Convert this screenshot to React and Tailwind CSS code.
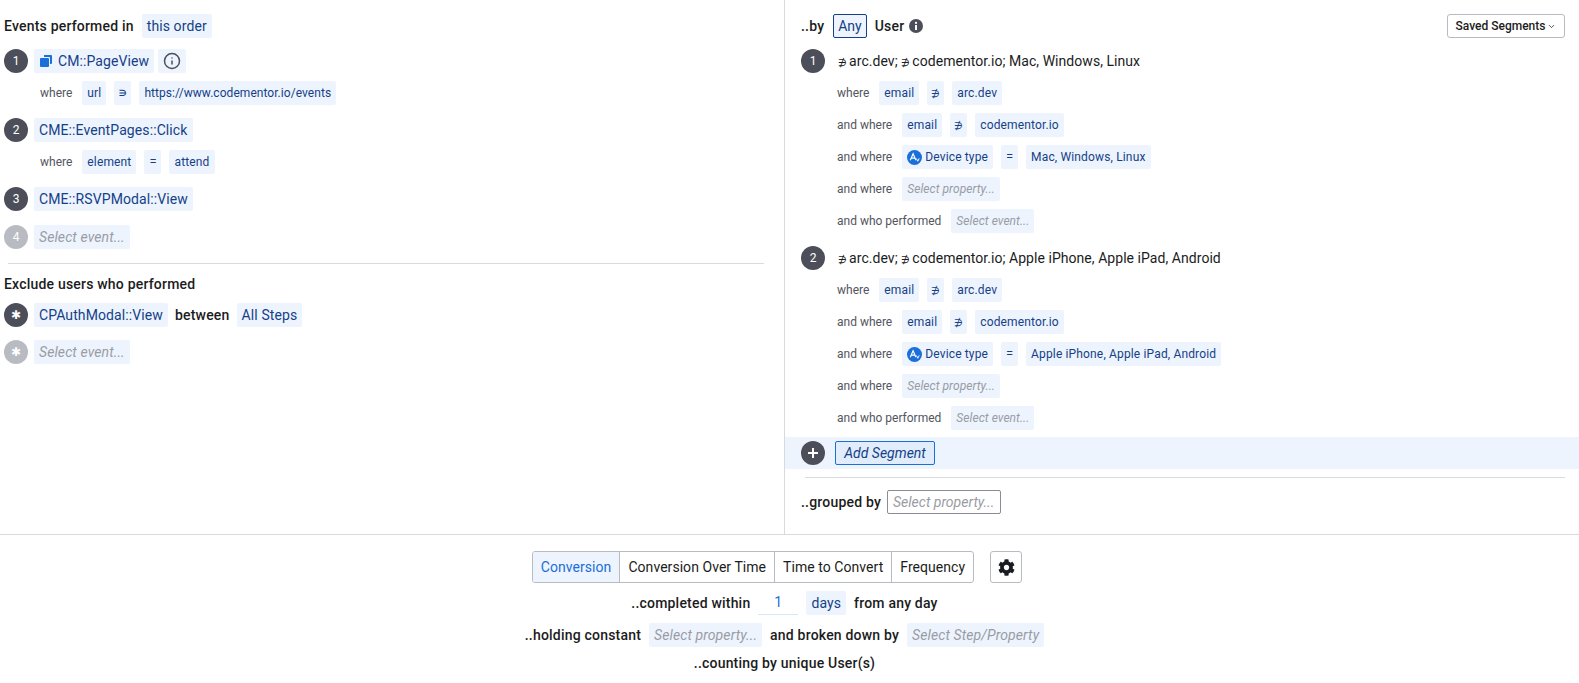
import { FaCog } from 'react-icons/fa';
import { Info, ChevronDown } from 'lucide-react';

const FONT = { fontFamily: 'Roboto, sans-serif' };

function Pill({ children, italic, small, tight, className = '' }) {
  let size = 'text-[14px] tracking-[0.1px]';
  if (small) size = italic || tight ? 'text-[12px] tracking-[0.05px]' : 'text-[12px] tracking-[0.15px]';
  return (
    <span
      className={`inline-flex items-center h-6 px-[5px] rounded-[2px] bg-[#edf4fd] whitespace-nowrap font-normal ${
        italic ? 'italic text-[#9a9ca5]' : 'text-[#153f88]'
      } ${size} ${className}`}
    >
      {children}
    </span>
  );
}

function Sym({ children, big }) {
  return (
    <span
      className={`inline-flex items-center justify-center w-[17px] h-6 rounded-[2px] bg-[#edf4fd] text-[#153f88] ${
        big ? 'text-[13px]' : 'text-[10px]'
      }`}
    >
      {children}
    </span>
  );
}

function Num({ children, faded }) {
  return (
    <span
      className={`flex items-center justify-center w-6 h-6 rounded-full text-white text-[12px] shrink-0 ${
        faded ? 'bg-[#b9bbc2]' : 'bg-[#4c4f5a]'
      }`}
    >
      {children}
    </span>
  );
}

function Clause({ label, children, className = '' }) {
  return (
    <div className={`flex items-center gap-2 h-6 ${className}`}>
      <span className="text-[12px] text-[#53555f] mr-[2px] whitespace-nowrap">{label}</span>
      {children}
    </div>
  );
}

function DeviceIcon() {
  return (
    <svg width="15" height="15" viewBox="0 0 16 16" className="mr-[3px] shrink-0">
      <circle cx="8" cy="8" r="8" fill="#1a6fd8" />
      <path d="M3.5 11 L6.5 4 L9.5 11 M4.6 8.6 H8.4" fill="none" stroke="#fff" strokeWidth="1.2" />
      <path d="M10 9 L11.5 12 L13 9" fill="none" stroke="#fff" strokeWidth="1" />
    </svg>
  );
}

function Title({ domains, devices }) {
  return (
    <span className="ml-[13px] text-[14px] tracking-[0.05px] text-[#1b1c21]">
      {domains.map((d) => (
        <span key={d}>
          <span className="text-[10px] mr-[2px]">∌</span>
          {d};{' '}
        </span>
      ))}
      {devices}
    </span>
  );
}

function Segment({ num, devices }) {
  return (
    <div>
      <div className="flex items-center h-6 pl-4">
        <Num>{num}</Num>
        <Title domains={['arc.dev', 'codementor.io']} devices={devices} />
      </div>
      <div className="flex flex-col gap-2 mt-2 pl-[52px]">
        <Clause label="where">
          <Pill small>email</Pill>
          <Sym>∌</Sym>
          <Pill small>arc.dev</Pill>
        </Clause>
        <Clause label="and where">
          <Pill small>email</Pill>
          <Sym>∌</Sym>
          <Pill small>codementor.io</Pill>
        </Clause>
        <Clause label="and where">
          <Pill small><DeviceIcon />Device type</Pill>
          <Sym big>=</Sym>
          <Pill small>{devices}</Pill>
        </Clause>
        <Clause label="and where">
          <Pill small italic>Select property...</Pill>
        </Clause>
        <Clause label="and who performed">
          <Pill small italic>Select event...</Pill>
        </Clause>
      </div>
    </div>
  );
}

function EventsPanel() {
  return (
    <div className="w-[785px] shrink-0 border-r border-[#d9dadd] pl-1 pr-[18px] pt-[14px]">
      <div className="flex items-center gap-2 h-6">
        <span className="text-[14px] font-medium tracking-[0.2px] text-[#1b1c21]">Events performed in</span>
        <Pill>this order</Pill>
      </div>

      <div className="flex items-center gap-[6px] h-6 mt-[11px]">
        <Num>1</Num>
        <Pill>
          <svg width="12" height="12" viewBox="0 0 12 12" className="mr-[6px] ml-[1px]">
            <path d="M4 0h7a1 1 0 0 1 1 1v7a1 1 0 0 1-1 1h-1V3a1 1 0 0 0-1-1H4z" fill="#1a6fd8" />
            <rect x="0" y="3" width="9" height="9" rx="1" fill="#1a6fd8" />
          </svg>
          CM::PageView
        </Pill>
        <Pill className="ml-[-2px]"><Info size={18} color="#4c4f5a" /></Pill>
      </div>
      <Clause label="where" className="mt-2 pl-9">
        <Pill small>url</Pill>
        <Sym big>∍</Sym>
        <Pill small tight>https://www.codementor.io/events</Pill>
      </Clause>

      <div className="flex items-center gap-[6px] h-6 mt-[13px]">
        <Num>2</Num>
        <Pill>CME::EventPages::Click</Pill>
      </div>
      <Clause label="where" className="mt-2 pl-9">
        <Pill small>element</Pill>
        <Sym big>=</Sym>
        <Pill small>attend</Pill>
      </Clause>

      <div className="flex items-center gap-[6px] h-6 mt-[13px]">
        <Num>3</Num>
        <Pill>CME::RSVPModal::View</Pill>
      </div>
      <div className="flex items-center gap-[6px] h-6 mt-[14px]">
        <Num faded>4</Num>
        <Pill italic>Select event...</Pill>
      </div>

      <div className="h-px bg-[#d9dadd] mt-[14px] ml-1 mr-[2px]" />

      <div className="text-[14px] font-medium tracking-[0.2px] text-[#1b1c21] mt-[10px] leading-5">Exclude users who performed</div>

      <div className="flex items-center gap-[6px] h-6 mt-[9px]">
        <Num>✱</Num>
        <Pill>CPAuthModal::View</Pill>
        <span className="text-[14px] font-medium tracking-[0.2px] text-[#1b1c21] mx-[1px]">between</span>
        <Pill>All Steps</Pill>
      </div>
      <div className="flex items-center gap-[6px] h-6 mt-[13px]">
        <Num faded>✱</Num>
        <Pill italic>Select event...</Pill>
      </div>
    </div>
  );
}

function SegmentsPanel() {
  return (
    <div className="flex-1 pt-[14px]">
      <div className="flex items-center h-6 pl-4 pr-[14px]">
        <span className="text-[14px] font-medium tracking-[0.2px] text-[#1b1c21]">..by</span>
        <span className="flex items-center h-6 px-[4px] ml-[9px] border border-[#153f88] rounded-[2px] bg-[#edf4fd] text-[14px] text-[#153f88]">Any</span>
        <span className="text-[14px] font-medium tracking-[0.2px] text-[#1b1c21] ml-2">User</span>
        <svg width="14" height="14" viewBox="0 0 14 14" className="ml-[5px]">
          <circle cx="7" cy="7" r="7" fill="#4c4f5a" />
          <circle cx="7" cy="3.9" r="1.1" fill="#fff" />
          <rect x="6" y="6" width="2" height="5" fill="#fff" />
        </svg>
        <button className="ml-auto flex items-center h-6 w-[118px] justify-center border border-[#b9bbc2] rounded-[3px] text-[12px] font-medium text-[#1b1c21]">
          Saved Segments
          <ChevronDown size={9} className="ml-[2px]" />
        </button>
      </div>

      <div className="flex flex-col gap-[13px] mt-[11px]">
        <Segment num="1" devices="Mac, Windows, Linux" />
        <Segment num="2" devices="Apple iPhone, Apple iPad, Android" />
      </div>

      <div className="flex items-center h-8 mt-[7px] pl-4 bg-[#edf4fd]">
        <span className="flex items-center justify-center w-6 h-6 rounded-full bg-[#4c4f5a] text-white">
          <svg width="12" height="12" viewBox="0 0 12 12"><path d="M6 1v10M1 6h10" stroke="#fff" strokeWidth="2" /></svg>
        </span>
        <span className="flex items-center h-6 w-[100px] justify-center ml-[10px] border border-[#1a6fd8] rounded-[2px] bg-[#e1edfb] italic text-[14px] text-[#153f88]">Add Segment</span>
      </div>

      <div className="h-px bg-[#d9dadd] mt-2 ml-5 mr-[14px]" />

      <div className="flex items-center gap-[6px] h-6 mt-3 pl-4">
        <span className="text-[14px] font-medium tracking-[0.2px] text-[#1b1c21]">..grouped by</span>
        <span className="flex items-center h-6 w-[114px] px-[5px] border border-[#8a8c96] rounded-[2px] italic text-[14px] text-[#9a9ca5]">Select property...</span>
      </div>
    </div>
  );
}

function Tab({ children, active }) {
  return (
    <span
      className={`flex items-center h-full px-2 text-[14px] tracking-[0.05px] whitespace-nowrap border-r border-[#b9bbc2] last:border-r-0 ${
        active ? 'bg-[#edf4fd] text-[#1a6fd8]' : 'text-[#1b1c21]'
      }`}
    >
      {children}
    </span>
  );
}

function BottomBar() {
  return (
    <div className="flex flex-col items-center border-t border-[#d9dadd] pt-4 pr-[10px]">
      <div className="flex items-center gap-[16px] h-[32px] mr-[15px]">
        <div className="flex items-center h-full border border-[#b9bbc2] rounded-[3px] overflow-hidden">
          <Tab active>Conversion</Tab>
          <Tab>Conversion Over Time</Tab>
          <Tab>Time to Convert</Tab>
          <Tab>Frequency</Tab>
        </div>
        <span className="flex items-center justify-center w-8 h-full border border-[#b9bbc2] rounded-[3px]">
          <FaCog size={17} color="#1b1c21" />
        </span>
      </div>
      <div className="flex items-center gap-2 h-6 mt-2 text-[14px] font-medium tracking-[0.2px] text-[#1b1c21]">
        <span>..completed within</span>
        <span className="flex items-center justify-center w-10 h-6 border-b border-[#d9e6f7] font-normal text-[#1a6fd8]">1</span>
        <Pill>days</Pill>
        <span>from any day</span>
      </div>
      <div className="flex items-center gap-2 h-6 mt-2 text-[14px] font-medium tracking-[0.2px] text-[#1b1c21]">
        <span>..holding constant</span>
        <Pill italic>Select property...</Pill>
        <span>and broken down by</span>
        <Pill italic>Select Step/Property</Pill>
      </div>
      <div className="mt-[6px] text-[14px] font-medium tracking-[0.2px] text-[#1b1c21] leading-5">..counting by unique User(s)</div>
    </div>
  );
}

export default function App() {
  return (
    <div className="w-[1579px] h-[683px] bg-white overflow-hidden" style={FONT}>
      <div className="flex h-[534px]">
        <EventsPanel />
        <SegmentsPanel />
      </div>
      <BottomBar />
    </div>
  );
}
